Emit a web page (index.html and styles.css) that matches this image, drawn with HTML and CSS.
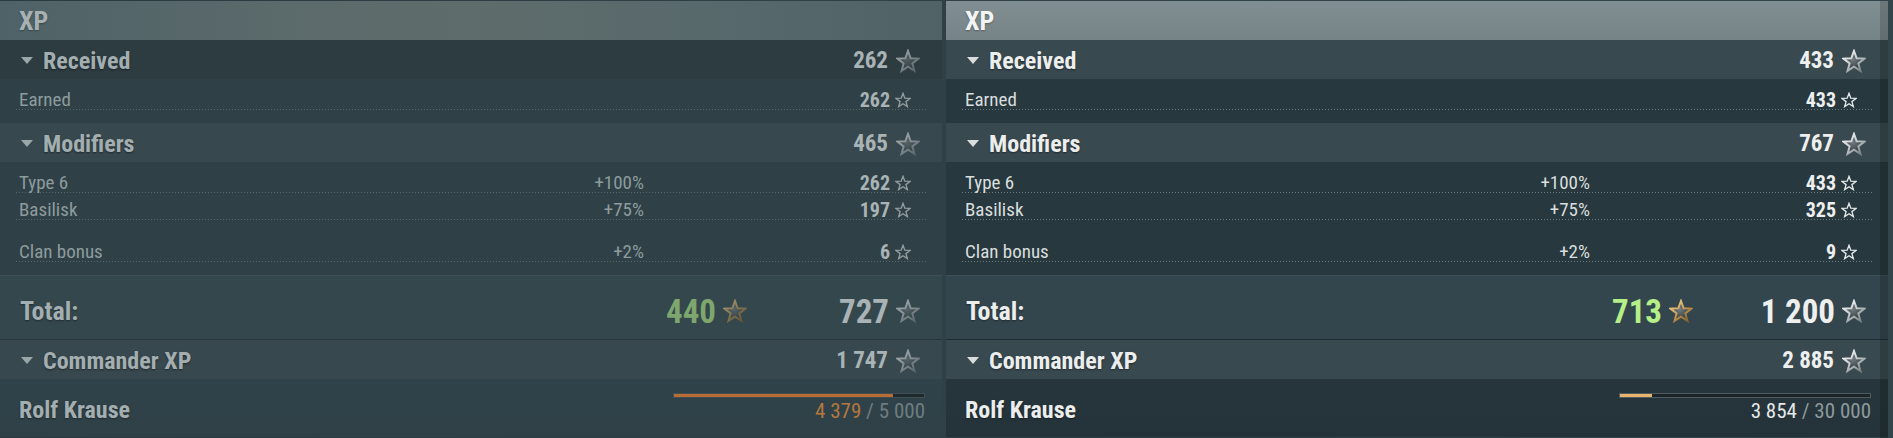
FILE: index.html
```html
<!DOCTYPE html>
<html lang="en">
<head>
<meta charset="utf-8">
<title>XP</title>
<link rel="stylesheet" href="styles.css">
</head>
<body>
<div class="board">
  <section class="panel panel--dim">
    <header class="panel__head">XP</header>

    <div class="sec">
      <div class="sec__head sec__head--first">
        <span class="caret"></span><span class="sec__title">Received</span>
        <span class="val val--lg">262<svg class="star star--lg"><use href="#star-big"/></svg></span>
      </div>
      <div class="sec__body">
        <div class="row"><span class="row__label">Earned</span><span class="row__pct"></span><span class="val val--sm">262<svg class="star star--sm"><use href="#star-sm"/></svg></span></div>
      </div>
    </div>

    <div class="sec">
      <div class="sec__head">
        <span class="caret"></span><span class="sec__title">Modifiers</span>
        <span class="val val--lg">465<svg class="star star--lg"><use href="#star-big"/></svg></span>
      </div>
      <div class="sec__body">
        <div class="row"><span class="row__label">Type 6</span><span class="row__pct">+100%</span><span class="val val--sm">262<svg class="star star--sm"><use href="#star-sm"/></svg></span></div>
        <div class="row"><span class="row__label">Basilisk</span><span class="row__pct">+75%</span><span class="val val--sm">197<svg class="star star--sm"><use href="#star-sm"/></svg></span></div>
        <div class="spacer"></div>
        <div class="row"><span class="row__label">Clan bonus</span><span class="row__pct">+2%</span><span class="val val--sm">6<svg class="star star--sm"><use href="#star-sm"/></svg></span></div>
      </div>
    </div>

    <div class="total">
      <span class="total__label">Total:</span>
      <span class="val val--xl val--green">440<svg class="star star--lg"><use href="#star-gold"/></svg></span>
      <span class="val val--xl">727<svg class="star star--lg"><use href="#star-big"/></svg></span>
    </div>

    <div class="sec__head sec__head--cmd">
      <span class="caret"></span><span class="sec__title">Commander XP</span>
      <span class="val val--lg">1 747<svg class="star star--lg"><use href="#star-big"/></svg></span>
    </div>
    <div class="crew">
      <span class="crew__name">Rolf Krause</span>
      <div class="prog prog--warn">
        <div class="prog__bar"><div class="prog__fill" style="width:87.6%"></div></div>
        <div class="prog__text">4 379 <span class="prog__max">/ 5 000</span></div>
      </div>
    </div>
  </section>

  <section class="panel panel--main">
    <header class="panel__head">XP</header>

    <div class="sec">
      <div class="sec__head">
        <span class="caret"></span><span class="sec__title">Received</span>
        <span class="val val--lg">433<svg class="star star--lg"><use href="#star-big"/></svg></span>
      </div>
      <div class="sec__body">
        <div class="row"><span class="row__label">Earned</span><span class="row__pct"></span><span class="val val--sm">433<svg class="star star--sm"><use href="#star-sm"/></svg></span></div>
      </div>
    </div>

    <div class="sec">
      <div class="sec__head">
        <span class="caret"></span><span class="sec__title">Modifiers</span>
        <span class="val val--lg">767<svg class="star star--lg"><use href="#star-big"/></svg></span>
      </div>
      <div class="sec__body">
        <div class="row"><span class="row__label">Type 6</span><span class="row__pct">+100%</span><span class="val val--sm">433<svg class="star star--sm"><use href="#star-sm"/></svg></span></div>
        <div class="row"><span class="row__label">Basilisk</span><span class="row__pct">+75%</span><span class="val val--sm">325<svg class="star star--sm"><use href="#star-sm"/></svg></span></div>
        <div class="spacer"></div>
        <div class="row"><span class="row__label">Clan bonus</span><span class="row__pct">+2%</span><span class="val val--sm">9<svg class="star star--sm"><use href="#star-sm"/></svg></span></div>
      </div>
    </div>

    <div class="total">
      <span class="total__label">Total:</span>
      <span class="val val--xl val--green">713<svg class="star star--lg"><use href="#star-gold"/></svg></span>
      <span class="val val--xl">1 200<svg class="star star--lg"><use href="#star-big"/></svg></span>
    </div>

    <div class="sec__head sec__head--cmd">
      <span class="caret"></span><span class="sec__title">Commander XP</span>
      <span class="val val--lg">2 885<svg class="star star--lg"><use href="#star-big"/></svg></span>
    </div>
    <div class="crew">
      <span class="crew__name">Rolf Krause</span>
      <div class="prog">
        <div class="prog__bar"><div class="prog__fill" style="width:12.8%"></div></div>
        <div class="prog__text">3 854 <span class="prog__max">/ 30 000</span></div>
      </div>
    </div>
    <div class="scrollbar"></div>
  </section>
</div>

<svg class="defs" width="0" height="0" aria-hidden="true">
  <defs>
    <linearGradient id="rim" x1="0" y1="0" x2="0.8" y2="1">
      <stop offset="0" stop-color="#ffffff"/>
      <stop offset="0.55" stop-color="#c4cacc"/>
      <stop offset="1" stop-color="#7a8386"/>
    </linearGradient>
    <radialGradient id="core" cx="0.45" cy="0.42" r="0.55">
      <stop offset="0" stop-color="#737d81"/>
      <stop offset="1" stop-color="#2c3539"/>
    </radialGradient>
    <linearGradient id="goldrim" x1="0" y1="0" x2="0.8" y2="1">
      <stop offset="0" stop-color="#f7dc98"/>
      <stop offset="0.55" stop-color="#c99b52"/>
      <stop offset="1" stop-color="#86622c"/>
    </linearGradient>
    <symbol id="star-big" viewBox="0 0 24 24">
      <path d="M12 2 L14.7 9.28 L22.46 9.6 L16.37 14.42 L18.47 21.9 L12 17.6 L5.53 21.9 L7.63 14.42 L1.54 9.6 L9.3 9.28 Z" fill="url(#core)" stroke="url(#rim)" stroke-width="2"/>
    </symbol>
    <symbol id="star-gold" viewBox="0 0 24 24">
      <path d="M12 2 L14.7 9.28 L22.46 9.6 L16.37 14.42 L18.47 21.9 L12 17.6 L5.53 21.9 L7.63 14.42 L1.54 9.6 L9.3 9.28 Z" fill="url(#core)" stroke="url(#goldrim)" stroke-width="2"/>
    </symbol>
    <symbol id="star-sm" viewBox="0 0 24 24">
      <path d="M12 2 L14.7 9.28 L22.46 9.6 L16.37 14.42 L18.47 21.9 L12 17.6 L5.53 21.9 L7.63 14.42 L1.54 9.6 L9.3 9.28 Z" fill="none" stroke="currentColor" stroke-width="2" stroke-linejoin="miter"/>
    </symbol>
  </defs>
</svg>
</body>
</html>
```
FILE: styles.css
```css
html, body {
  margin: 0;
  padding: 0;
}

body {
  width: 1893px;
  height: 438px;
  overflow: hidden;
  padding-top: 1px;
  box-sizing: border-box;
  background: linear-gradient(90deg, #2a3a40 0%, #2f4147 50%, #32454b 100%);
  font-family: "Roboto Condensed", "Roboto", sans-serif;
  font-stretch: condensed;
}

.board {
  display: flex;
  gap: 4px;
}

/* ---------- panel colour themes ---------- */
.panel {
  --hdr-bg: linear-gradient(180deg, #818e92 0%, #7a878b 60%, #768387 100%);
  --hdr-text: #f2f4f4;
  --sec-bg: #38494f;
  --first-bg: #38494f;
  --row-bg: #27383e;
  --total-bg: #34464d;
  --crew-bg: linear-gradient(180deg, #26363c 0%, #24333a 100%);
  --title: #eceeee;
  --caret: #d9dddd;
  --label: #d9dede;
  --num: #eef0f0;
  --dot: rgba(195, 205, 207, 0.45);
  --green: #b5ef87;
  --prog: #e6e9e9;
  --prog-max: #8e9a9c;
  --fill: #eab46e;
  --track: #1b2427;
  --track-edge: #4d5c60;
  --cmd-line: #1f2c31;

  width: 942px;
  flex: none;
  position: relative;
  height: 437px;
  overflow: hidden;
}

.panel--dim {
  --hdr-bg: linear-gradient(90deg, #4f6267 0%, #5b6a6b 30%, #5e6c6b 50%, #58696c 75%, #506266 100%);
  --hdr-text: #a7b1b3;
  --sec-bg: #37484e;
  --first-bg: #2d3c41;
  --row-bg: #2f4147;
  --total-bg: #34474d;
  --crew-bg: linear-gradient(180deg, #31434a 0%, #2f4147 100%);
  --title: #a3aeb0;
  --caret: #9aa6a8;
  --label: #8d9b9e;
  --num: #a9b3b5;
  --dot: rgba(150, 165, 168, 0.4);
  --green: #7ea66d;
  --prog-max: #6f7d80;
  --track: #1f2a2e;
  --track-edge: #3f4f54;
  --cmd-line: #27363b;
}

.panel--dim .star {
  opacity: 0.55;
}

.panel--dim .prog--warn {
  --prog: #b5773f;
  --fill: #b96c33;
}

/* ---------- header ---------- */
.panel__head {
  height: 39px;
  display: flex;
  align-items: center;
  padding-left: 19px;
  background: var(--hdr-bg);
  color: var(--hdr-text);
  font-size: 26px;
  font-weight: 700;
  text-shadow: 0 1px 2px rgba(0, 0, 0, 0.3);
}

/* ---------- section headers ---------- */
.sec__head {
  height: 39px;
  box-sizing: border-box;
  display: flex;
  align-items: center;
  padding: 2px 22px 0 21px;
  background: var(--sec-bg);
}

.sec__head--first {
  background: var(--first-bg);
}

.sec__head--cmd {
  height: 40px;
  border-top: 1px solid var(--cmd-line);
}

.caret {
  width: 0;
  height: 0;
  border-left: 6px solid transparent;
  border-right: 6px solid transparent;
  border-top: 7px solid var(--caret);
  margin-right: 10px;
}

.sec__title {
  flex: 1;
  font-size: 24px;
  font-weight: 700;
  color: var(--title);
  text-shadow: 0 1px 2px rgba(0, 0, 0, 0.45);
}

/* ---------- values ---------- */
.val {
  display: flex;
  align-items: center;
  justify-content: flex-end;
  font-weight: 700;
  color: var(--num);
  white-space: nowrap;
}

.val--lg {
  font-size: 23px;
  gap: 8px;
}

.val--sm {
  font-size: 20px;
  line-height: 20px;
  gap: 5px;
}

.val--xl {
  font-size: 33px;
  gap: 7px;
}

.val--green {
  color: var(--green);
}

.star {
  flex: none;
  display: block;
}

.star--lg {
  width: 24px;
  height: 24px;
}

.star--sm {
  width: 16px;
  height: 16px;
  color: #e4e8e8;
}

/* ---------- rows ---------- */
.sec__body {
  background: var(--row-bg);
  padding: 4px 0 13px;
}

.row {
  height: 27px;
  margin: 0 15px 0 16px;
  padding: 0 16px 0 3px;
  box-sizing: border-box;
  display: grid;
  grid-template-columns: 1fr auto 267px;
  align-items: end;
  background-image: linear-gradient(90deg, var(--dot) 1px, transparent 1px);
  background-size: 3px 1px;
  background-repeat: repeat-x;
  background-position: left bottom;
}

.row__label,
.row__pct {
  font-size: 19px;
  line-height: 20px;
  color: var(--label);
}

.row__pct {
  text-align: right;
}

.spacer {
  height: 15px;
}

/* ---------- total ---------- */
.total {
  height: 64px;
  box-sizing: border-box;
  border-top: 1px solid rgba(255, 255, 255, 0.05);
  background: var(--total-bg);
  display: grid;
  grid-template-columns: 1fr auto 173px;
  align-items: center;
  padding: 7px 22px 0 20px;
}

.total__label {
  font-size: 26px;
  font-weight: 700;
  color: var(--title);
  text-shadow: 0 1px 2px rgba(0, 0, 0, 0.4);
}

/* ---------- crew ---------- */
.crew {
  height: 58px;
  box-sizing: border-box;
  background: var(--crew-bg);
  display: flex;
  justify-content: space-between;
  align-items: flex-start;
  padding: 14px 17px 0 19px;
}

.crew__name {
  font-size: 24px;
  line-height: 28px;
  font-weight: 700;
  color: var(--title);
  margin-top: 3px;
  text-shadow: 0 1px 2px rgba(0, 0, 0, 0.4);
}

.prog {
  width: 252px;
}

.prog__bar {
  height: 5px;
  box-sizing: border-box;
  border: 1px solid var(--track-edge);
  background: var(--track);
}

.prog__fill {
  height: 100%;
  background: var(--fill);
}

.prog__text {
  margin-top: 2px;
  text-align: right;
  font-size: 21px;
  line-height: 22px;
  color: var(--prog);
}

.prog__max {
  color: var(--prog-max);
}

/* ---------- scrollbar track overlay ---------- */
.scrollbar {
  position: absolute;
  top: 0;
  right: 0;
  bottom: 0;
  width: 8px;
  background: rgba(0, 0, 0, 0.16);
}

.defs {
  display: block;
  width: 0;
  height: 0;
  overflow: hidden;
}
```
